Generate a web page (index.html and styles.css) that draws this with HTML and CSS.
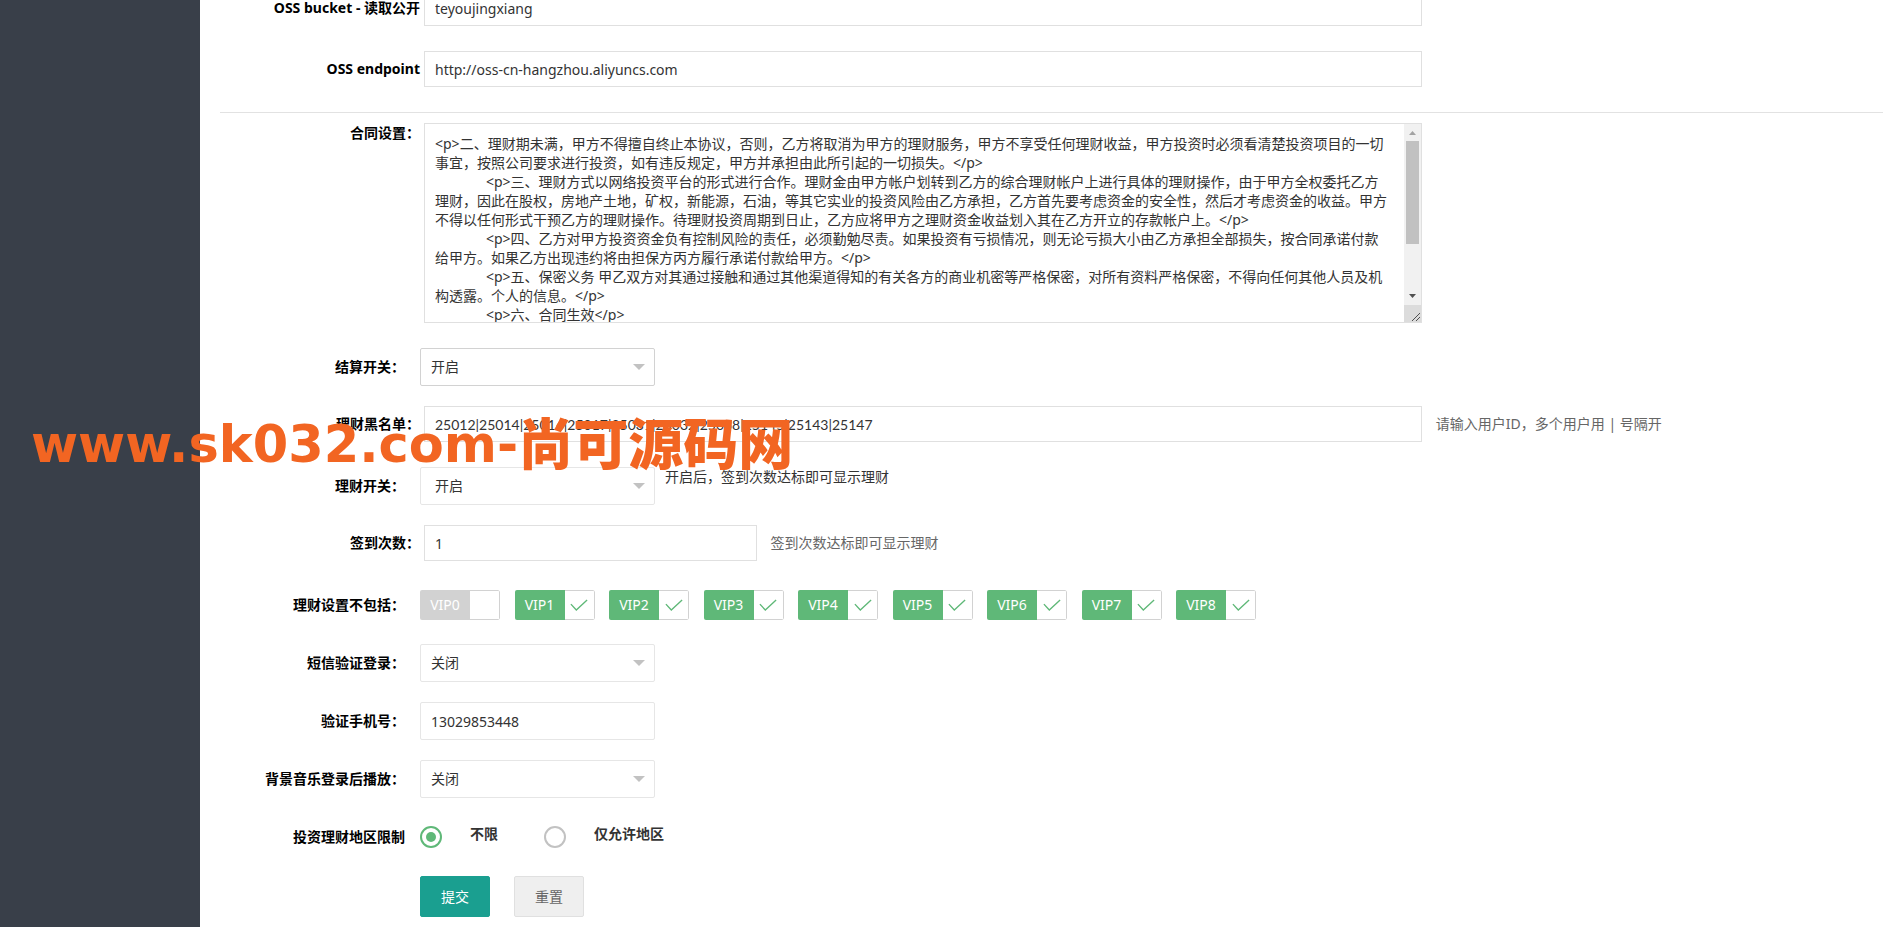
FILE: index.html
```html
<!DOCTYPE html>
<html lang="zh-CN">
<head>
<meta charset="utf-8">
<title>系统设置</title>
<link rel="stylesheet" href="styles.css">
</head>
<body>
<div class="page">
  <aside class="sidebar"></aside>
  <main class="main">
    <form class="form">
      <div class="row row-plain">
        <label class="label" for="bucket">OSS bucket - 读取公开</label>
        <input class="text wide" id="bucket" type="text" value="teyoujingxiang">
      </div>
      <div class="row row-plain">
        <label class="label" for="endpoint">OSS endpoint</label>
        <input class="text wide" id="endpoint" type="text" value="http://oss-cn-hangzhou.aliyuncs.com">
      </div>
      <hr class="divider">
      <div class="row row-plain row-top">
        <label class="label" for="contract">合同设置：</label>
        <div class="area wide">
          <textarea id="contract">
<p>二、理财期未满，甲方不得擅自终止本协议，否则，乙方将取消为甲方的理财服务，甲方不享受任何理财收益，甲方投资时必须看清楚投资项目的一切事宜，按照公司要求进行投资，如有违反规定，甲方并承担由此所引起的一切损失。&lt;/p>
              <p>三、理财方式以网络投资平台的形式进行合作。理财金由甲方帐户划转到乙方的综合理财帐户上进行具体的理财操作，由于甲方全权委托乙方理财，因此在股权，房地产土地，矿权，新能源，石油，等其它实业的投资风险由乙方承担，乙方首先要考虑资金的安全性，然后才考虑资金的收益。甲方不得以任何形式干预乙方的理财操作。待理财投资周期到日止，乙方应将甲方之理财资金收益划入其在乙方开立的存款帐户上。&lt;/p>
              <p>四、乙方对甲方投资资金负有控制风险的责任，必须勤勉尽责。如果投资有亏损情况，则无论亏损大小由乙方承担全部损失，按合同承诺付款给甲方。如果乙方出现违约将由担保方丙方履行承诺付款给甲方。&lt;/p>
              <p>五、保密义务 甲乙双方对其通过接触和通过其他渠道得知的有关各方的商业机密等严格保密，对所有资料严格保密，不得向任何其他人员及机构透露。个人的信息。&lt;/p>
              <p>六、合同生效&lt;/p>




</textarea>
          <div class="bar" aria-hidden="true">
            <svg class="bar-arrow" viewBox="0 0 17 17"><path d="M5 11h7L8.500 7z" fill="#a3a3a3"/></svg>
            <div class="bar-track"><div class="bar-thumb"></div></div>
            <svg class="bar-arrow" viewBox="0 0 17 17"><path d="M5 6h7L8.500 10z" fill="#505050"/></svg>
            <svg class="bar-grip" viewBox="0 0 17 17"><path d="M8 16l8-8M12 16l4-4" stroke="#505050" fill="none"/></svg>
          </div>
        </div>
      </div>
      <div class="row">
        <label class="label label-pad" for="settle">结算开关：</label>
        <div class="picker picker-dark"><select id="settle"><option>开启</option></select></div>
      </div>
      <div class="row row-plain">
        <label class="label" for="blacklist">理财黑名单：</label>
        <input class="text text-ids wide" id="blacklist" type="text" value="25012|25014|25016|25017|25031|25032|25038|25145|25143|25147">
        <span class="hint">请输入用户ID，多个用户用 | 号隔开</span>
      </div>
      <div class="row">
        <label class="label label-pad" for="finance">理财开关：</label>
        <div class="picker picker-inset"><select id="finance"><option>开启</option></select></div>
        <span class="note">开启后，签到次数达标即可显示理财</span>
      </div>
      <div class="row row-plain">
        <label class="label" for="signs">签到次数：</label>
        <input class="text narrow" id="signs" type="text" value="1">
        <span class="hint">签到次数达标即可显示理财</span>
      </div>
      <div class="row" role="group" aria-labelledby="vip-title">
        <span class="label label-pad" id="vip-title">理财设置不包括：</span>
        <div class="vips">
          <label class="vip"><input type="checkbox"><span class="vip-name">VIP0</span><span class="vip-box"><svg viewBox="0 0 20 14"><path d="M1 5.5 7 12 19 1"/></svg></span></label>
          <label class="vip"><input type="checkbox" checked><span class="vip-name">VIP1</span><span class="vip-box"><svg viewBox="0 0 20 14"><path d="M1 5.5 7 12 19 1"/></svg></span></label>
          <label class="vip"><input type="checkbox" checked><span class="vip-name">VIP2</span><span class="vip-box"><svg viewBox="0 0 20 14"><path d="M1 5.5 7 12 19 1"/></svg></span></label>
          <label class="vip"><input type="checkbox" checked><span class="vip-name">VIP3</span><span class="vip-box"><svg viewBox="0 0 20 14"><path d="M1 5.5 7 12 19 1"/></svg></span></label>
          <label class="vip"><input type="checkbox" checked><span class="vip-name">VIP4</span><span class="vip-box"><svg viewBox="0 0 20 14"><path d="M1 5.5 7 12 19 1"/></svg></span></label>
          <label class="vip"><input type="checkbox" checked><span class="vip-name">VIP5</span><span class="vip-box"><svg viewBox="0 0 20 14"><path d="M1 5.5 7 12 19 1"/></svg></span></label>
          <label class="vip"><input type="checkbox" checked><span class="vip-name">VIP6</span><span class="vip-box"><svg viewBox="0 0 20 14"><path d="M1 5.5 7 12 19 1"/></svg></span></label>
          <label class="vip"><input type="checkbox" checked><span class="vip-name">VIP7</span><span class="vip-box"><svg viewBox="0 0 20 14"><path d="M1 5.5 7 12 19 1"/></svg></span></label>
          <label class="vip"><input type="checkbox" checked><span class="vip-name">VIP8</span><span class="vip-box"><svg viewBox="0 0 20 14"><path d="M1 5.5 7 12 19 1"/></svg></span></label>
        </div>
      </div>
      <div class="row">
        <label class="label label-pad" for="sms">短信验证登录：</label>
        <div class="picker"><select id="sms"><option>关闭</option></select></div>
      </div>
      <div class="row">
        <label class="label label-pad" for="phone">验证手机号：</label>
        <input class="phone" id="phone" type="text" value="13029853448">
      </div>
      <div class="row">
        <label class="label label-pad" for="music">背景音乐登录后播放：</label>
        <div class="picker"><select id="music"><option>关闭</option></select></div>
      </div>
      <div class="row" role="radiogroup" aria-labelledby="area-title">
        <span class="label label-pad" id="area-title">投资理财地区限制</span>
        <div class="radios">
          <label class="radio"><input type="radio" name="area" checked><span>不限</span></label>
          <label class="radio"><input type="radio" name="area"><span>仅允许地区</span></label>
        </div>
      </div>
      <div class="actions">
        <button class="btn btn-primary" type="submit">提交</button>
        <button class="btn" type="reset">重置</button>
      </div>
    </form>
  </main>
  <div class="watermark"><span>www.sk032.com-</span><span class="watermark-cn">尚可源码网</span></div>
</div>
</body>
</html>
```

FILE: styles.css
```css
* {
  box-sizing: border-box;
}

body {
  margin: 0;
  background: #fff;
  color: #333;
  font: 14px/20px "Noto Sans", "Noto Sans CJK SC", sans-serif;
}

input,
select,
textarea,
button {
  margin: 0;
  color: #333;
  font: inherit;
  outline: none;
}

.page {
  position: relative;
  display: flex;
  height: 100vh;
  overflow: hidden;
}

.sidebar {
  flex: 0 0 200px;
  background: #393f49;
}

.main {
  flex: 1;
  min-width: 0;
  padding: 0 16px 0 20px;
}

/* the form is scrolled slightly past its first visible row */
.form {
  margin-top: -10px;
}

.row {
  display: flex;
  align-items: center;
  min-height: 38px;
  margin-bottom: 20px;
}

.row-plain {
  min-height: 36px;
  margin-bottom: 25px;
}

.row-top {
  align-items: flex-start;
}

.label {
  flex: 0 0 200px;
  color: #000;
  font-weight: 700;
  text-align: right;
}

.label-pad {
  padding-right: 15px;
}

.divider {
  height: 1px;
  margin: 0 0 10px;
  border: 0;
  background: #e2e2e2;
}

.wide {
  flex: 0 0 60%;
}

.narrow {
  flex: 0 0 20%;
  min-width: 0;
}

.text,
.area {
  margin-left: 4px;
  border: 1px solid #e0e0e0;
  background: #fff;
}

.text {
  height: 36px;
  padding: 0 10px;
}

.text-ids {
  font-family: Lato, "Noto Sans", sans-serif;
}

.area {
  position: relative;
  height: 200px;
}

.area textarea {
  display: block;
  width: 100%;
  height: 100%;
  padding: 10px 32px 10px 10px;
  border: 0;
  background: none;
  line-height: 19px;
  resize: none;
}

.bar {
  position: absolute;
  top: 0;
  right: 0;
  bottom: 0;
  display: flex;
  flex-direction: column;
  width: 17px;
  background: #f1f1f1;
}

.bar-arrow,
.bar-grip {
  display: block;
  flex: 0 0 17px;
  width: 17px;
}

.bar-grip {
  background: #dcdcdc;
}

.bar-track {
  flex: 1;
  padding: 0 2px;
}

.bar-thumb {
  height: 70%;
  background: #c1c1c1;
}

.hint {
  margin-left: 14px;
  color: #666;
}

.note {
  align-self: flex-start;
  margin-left: 10px;
}

.picker {
  position: relative;
  flex: 0 0 235px;
}

.picker::after {
  content: "";
  position: absolute;
  top: 16px;
  right: 10px;
  border: 6px solid transparent;
  border-top-color: #c2c2c2;
  border-bottom-width: 0;
  pointer-events: none;
}

.picker select,
.phone {
  display: block;
  width: 100%;
  height: 38px;
  padding: 0 10px;
  border: 1px solid #e6e6e6;
  border-radius: 2px;
  background: #fff;
  appearance: none;
}

.picker-dark select {
  border-color: #d2d2d2;
}

.picker-inset select {
  padding-left: 14px;
}

.phone {
  flex: 0 0 235px;
  min-width: 0;
}

.vips {
  display: flex;
  justify-content: space-between;
  width: 836px;
}

.vip {
  position: relative;
  display: flex;
  width: 80px;
  height: 30px;
  border-radius: 2px;
  overflow: hidden;
  cursor: pointer;
}

.vip input {
  position: absolute;
  opacity: 0;
}

.vip-name {
  flex: 1;
  background: #d2d2d2;
  color: #fff;
  line-height: 30px;
  text-align: center;
}

.vip-box {
  display: flex;
  align-items: center;
  justify-content: center;
  width: 30px;
  border: 1px solid #d2d2d2;
  border-left: 0;
  border-radius: 0 2px 2px 0;
}

.vip-box svg {
  width: 18px;
  height: 13px;
  fill: none;
  stroke: #5fb878;
  stroke-width: 1.5;
  visibility: hidden;
}

.vip input:checked + .vip-name {
  background: #5fb878;
}

.vip input:checked ~ .vip-box svg {
  visibility: visible;
}

.radios {
  display: flex;
  gap: 46px;
}

.radio {
  display: flex;
  align-items: center;
  gap: 28px;
  height: 38px;
  font-weight: 700;
}

.radio span {
  padding-bottom: 6px;
}

.radio input {
  display: grid;
  place-items: center;
  width: 22px;
  height: 22px;
  border: 2px solid #c2c2c2;
  border-radius: 50%;
  background: #fff;
  appearance: none;
}

.radio input:checked {
  border-color: #5fb878;
}

.radio input:checked::before {
  content: "";
  width: 10px;
  height: 10px;
  border-radius: 50%;
  background: #5fb878;
}

.actions {
  display: flex;
  gap: 24px;
  padding-left: 200px;
}

.btn {
  width: 70px;
  height: 41px;
  padding: 0;
  border: 1px solid #e0e0e0;
  border-radius: 2px;
  background: #efefef;
  color: #666;
}

.btn-primary {
  border-color: #1a9f90;
  background: #1a9f90;
  color: #fff;
}

.watermark {
  position: absolute;
  top: 415px;
  left: 31px;
  display: flex;
  align-items: flex-start;
  color: #f26522;
  font: 700 51px/60px "DejaVu Sans", "Noto Sans CJK SC", sans-serif;
  white-space: nowrap;
  pointer-events: none;
}

.watermark-cn {
  font: 900 55px/50px "Noto Sans CJK SC", sans-serif;
}
```
